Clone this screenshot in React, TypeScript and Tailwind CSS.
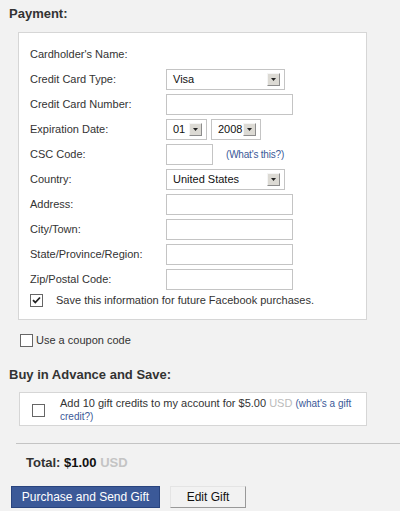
import type { ReactNode } from 'react';

function Arrow() {
  return (
    <span className="w-[13px] h-[13px] shrink-0 bg-[#dcdad4] border border-t-[#f5f5f5] border-l-[#f5f5f5] border-r-[#8c8c8c] border-b-[#8c8c8c] flex items-center justify-center">
      <svg width="5" height="3" viewBox="0 0 5 3">
        <path d="M0 0h5L2.5 3z" fill="#222" />
      </svg>
    </span>
  );
}

function Select({ value, width }: { value: string; width: string }) {
  return (
    <div className={`${width} h-[21px] bg-white border border-[#c4c4c4] flex items-center justify-between pl-[6px] pr-[4px] text-[11px] text-[#111]`}>
      <span>{value}</span>
      <Arrow />
    </div>
  );
}

function TextInput({ width = 'w-[127px]' }: { width?: string }) {
  return <div className={`${width} h-[21px] bg-white border border-[#c4c4c4]`} />;
}

function Checkbox({ checked = false }: { checked?: boolean }) {
  return (
    <span className="w-[13px] h-[13px] shrink-0 bg-white border border-[#666] flex items-center justify-center">
      {checked && (
        <svg width="9" height="9" viewBox="0 0 9 9">
          <path d="M1 4.2l2.3 2.3L8 1.5" stroke="#222" strokeWidth="1.8" fill="none" />
        </svg>
      )}
    </span>
  );
}

function Row({ label, children }: { label: string; children?: ReactNode }) {
  return (
    <>
      <div className="text-[11px] text-[#333]">{label}</div>
      <div className="flex items-center">{children}</div>
    </>
  );
}

export default function App() {
  return (
    <div className="w-[400px] h-[511px] overflow-hidden bg-[#f2f2f2] font-['Liberation_Sans',Arial,sans-serif] text-[#333]">
      <h2 className="pt-[6px] pl-[9px] text-[13px] leading-[16px] font-bold text-[#333]">Payment:</h2>

      <div className="mt-[10px] ml-[18px] w-[349px] bg-white border border-[#d6d6d6] pt-[9px] pb-[11px] pl-[11px]">
        <div className="grid grid-cols-[136px_auto] auto-rows-[25px] items-center">
          <Row label="Cardholder's Name:" />
          <Row label="Credit Card Type:">
            <Select value="Visa" width="w-[119px]" />
          </Row>
          <Row label="Credit Card Number:">
            <TextInput />
          </Row>
          <Row label="Expiration Date:">
            <div className="flex gap-[4px]">
              <Select value="01" width="w-[41px]" />
              <Select value="2008" width="w-[50px]" />
            </div>
          </Row>
          <Row label="CSC Code:">
            <TextInput width="w-[47px]" />
            <a className="ml-[13px] text-[10px] tracking-[-0.2px] text-[#3b5998]">(What's this?)</a>
          </Row>
          <Row label="Country:">
            <Select value="United States" width="w-[119px]" />
          </Row>
          <Row label="Address:">
            <TextInput />
          </Row>
          <Row label="City/Town:">
            <TextInput />
          </Row>
          <Row label="State/Province/Region:">
            <TextInput />
          </Row>
          <Row label="Zip/Postal Code:">
            <TextInput />
          </Row>
        </div>
        <div className="h-[16px] flex items-center gap-[13px] text-[11px] text-[#333]">
          <Checkbox checked />
          <span>Save this information for future Facebook purchases.</span>
        </div>
      </div>

      <div className="mt-[13px] ml-[20px] h-[15px] flex items-center gap-[3px] text-[11px] text-[#333]">
        <Checkbox />
        <span>Use a coupon code</span>
      </div>

      <h2 className="mt-[19px] pl-[9px] text-[13px] leading-[16px] font-bold text-[#333]">Buy in Advance and Save:</h2>

      <div className="mt-[9px] ml-[19px] w-[348px] bg-white border border-[#d6d6d6] pt-[4px] pb-[2px] pl-[12px] flex items-center gap-[15px]">
        <Checkbox />
        <p className="w-[300px] text-[11px] leading-[13px] text-[#333]">
          Add 10 gift credits to my account for $5.00 <span className="text-[#bbb]">USD</span>{' '}
          <a className="text-[10px] text-[#3b5998]">(what's a gift credit?)</a>
        </p>
      </div>

      <div className="mt-[17px] ml-[16px] border-t border-[#c4c4c4]" />

      <div className="mt-[11px] pl-[26px] text-[13px] leading-[16px] font-bold">
        <span className="text-[#333]">Total:</span> <span className="text-[#111]">$1.00</span>{' '}
        <span className="text-[#c4c4c4]">USD</span>
      </div>

      <div className="mt-[15px] pl-[11px] flex gap-[10px]">
        <button className="w-[149px] h-[22px] bg-[#3b5998] border border-[#29447e] text-white text-[12px]">
          Purchase and Send Gift
        </button>
        <button className="w-[76px] h-[22px] bg-[#f2f2f2] border border-t-[#e4e4e4] border-l-[#e4e4e4] border-r-[#999] border-b-[#999] text-[#111] text-[12px]">
          Edit Gift
        </button>
      </div>
    </div>
  );
}
